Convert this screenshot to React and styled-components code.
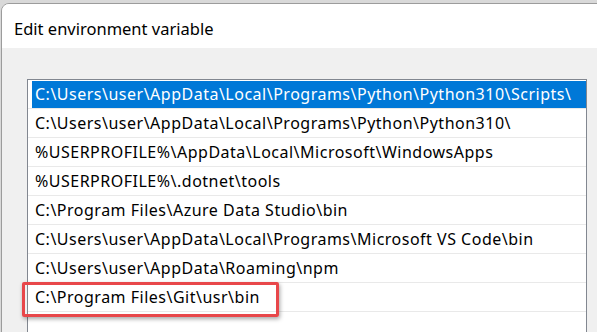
import styled, { createGlobalStyle } from "styled-components";

const paths = [
  "C:\\Users\\user\\AppData\\Local\\Programs\\Python\\Python310\\Scripts\\",
  "C:\\Users\\user\\AppData\\Local\\Programs\\Python\\Python310\\",
  "%USERPROFILE%\\AppData\\Local\\Microsoft\\WindowsApps",
  "%USERPROFILE%\\.dotnet\\tools",
  "C:\\Program Files\\Azure Data Studio\\bin",
  "C:\\Users\\user\\AppData\\Local\\Programs\\Microsoft VS Code\\bin",
  "C:\\Users\\user\\AppData\\Roaming\\npm",
  "C:\\Program Files\\Git\\usr\\bin",
  "",
];

const EditEnv = () => {
  return (
    <>
      <GlobalStyle />
      <Desktop>
        <Window>
          <TitleBar>Edit environment variable</TitleBar>
          <Body>
            <List>
              {paths.map((p, i) => (
                <Row key={i}>
                  <Label selected={i === 0}>{p}</Label>
                  {i === 7 && <Callout />}
                </Row>
              ))}
            </List>
          </Body>
        </Window>
      </Desktop>
    </>
  );
};

export default EditEnv;

const GlobalStyle = createGlobalStyle`
  html, body {
    margin: 0;
    padding: 0;
    overflow: hidden;
  }
  body {
    font-family: "Noto Sans", "Open Sans", sans-serif;
  }
`;

const Desktop = styled.div`
  width: 597px;
  height: 332px;
  background: #d9d9d9;
  padding: 3px 0 0 1px;
  box-sizing: border-box;
  overflow: hidden;
`;

const Window = styled.div`
  width: 640px;
  height: 360px;
  border: 1px solid #9c9c9c;
  border-top-left-radius: 8px;
  background: #f0f0f0;
  overflow: hidden;
`;

const TitleBar = styled.div`
  height: 44px;
  background: #ffffff;
  padding: 15px 0 0 12px;
  box-sizing: border-box;
  font-size: 16.5px;
  line-height: 20px;
  color: #000;
`;

const Body = styled.div`
  padding: 31px 0 0 25px;
`;

const List = styled.div`
  width: 558px;
  height: 300px;
  border: 1px solid #828790;
  background: #fff;
`;

const Row = styled.div`
  position: relative;
  height: 29px;
  border-bottom: 1px solid #e9e9e9;
  box-sizing: border-box;
  padding: 1px 0 1px 4px;
`;

const Label = styled.div`
  height: 27px;
  padding-left: 3px;
  font-size: 16px;
  letter-spacing: 0.5px;
  line-height: 27px;
  white-space: nowrap;
  color: ${(p) => (p.selected ? "#ffffff" : "#000000")};
  background: ${(p) => (p.selected ? "#0078d7" : "transparent")};
`;

const Callout = styled.div`
  position: absolute;
  left: -6px;
  top: -1px;
  width: 257px;
  height: 35px;
  box-sizing: border-box;
  border: 3px solid #e8474a;
  border-radius: 2px;
  box-shadow: 1px 2px 4px rgba(0, 0, 0, 0.35);
`;
